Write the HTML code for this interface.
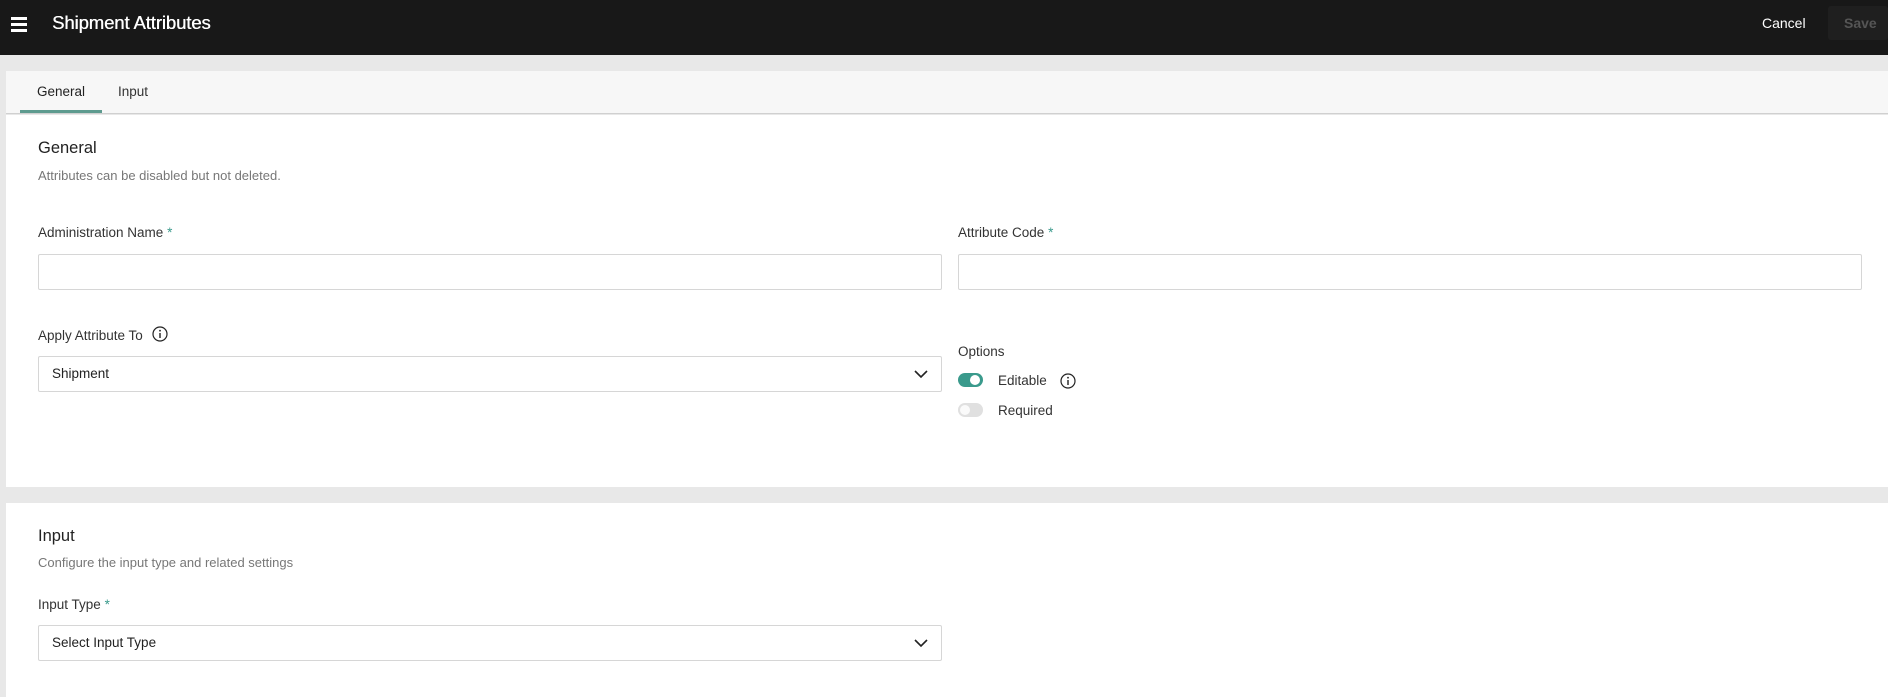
<!DOCTYPE html>
<html><head><meta charset="utf-8"><style>
*{box-sizing:border-box;margin:0;padding:0}
body{width:1888px;height:697px;overflow:hidden;background:#e8e8e8;font-family:"Liberation Sans",Arial,sans-serif;color:#2a2a2a;position:relative}
.a{position:absolute}
.hdr{left:0;top:0;width:1888px;height:55px;background:#181818}
.lbl{font-size:13.5px;color:#333;white-space:nowrap}
.star{color:#3a9a8c}
.box{border:1px solid #d6d6d6;border-radius:2px;background:#fff}
.sel{font-size:13.5px;color:#222;padding-left:13px;line-height:34px}
.chev{position:absolute;right:12px;top:10px}
</style></head><body>
<div class="a hdr">
  <div class="a" style="left:11px;top:17px;width:16px;height:2.5px;background:#fff"></div>
  <div class="a" style="left:11px;top:23px;width:16px;height:2.5px;background:#fff"></div>
  <div class="a" style="left:11px;top:29px;width:16px;height:2.5px;background:#fff"></div>
  <div class="a" style="left:52px;top:12px;color:#fff;font-size:18.5px;letter-spacing:-0.1px;text-shadow:0.4px 0 0 #fff">Shipment Attributes</div>
  <div class="a" style="left:1762px;top:15px;color:#fff;font-size:14px">Cancel</div>
  <div class="a" style="left:1828px;top:6px;width:60px;height:34px;background:#1f1f1f;border-radius:3px"></div>
  <div class="a" style="left:1844px;top:15px;color:#555;font-size:14px;font-weight:bold">Save</div>
</div>
<div class="a" style="left:6px;top:71px;width:1882px;height:43px;background:#f7f7f7;border-bottom:1px solid #d0d0d0"></div>
<div class="a" style="left:37px;top:84px;font-size:13.5px;color:#222">General</div>
<div class="a" style="left:20px;top:110px;width:82px;height:3px;background:#5e9b8f"></div>
<div class="a" style="left:118px;top:84px;font-size:13.5px;color:#333">Input</div>

<div class="a" style="left:6px;top:115px;width:1882px;height:372px;background:#fff"></div>
<div class="a" style="left:38px;top:139px;font-size:16.5px;color:#222">General</div>
<div class="a" style="left:38px;top:168px;font-size:13px;color:#777">Attributes can be disabled but not deleted.</div>

<div class="a lbl" style="left:38px;top:225px">Administration Name <span class="star">*</span></div>
<div class="a box" style="left:38px;top:254px;width:904px;height:36px"></div>
<div class="a lbl" style="left:958px;top:225px">Attribute Code <span class="star">*</span></div>
<div class="a box" style="left:958px;top:254px;width:904px;height:36px"></div>

<div class="a lbl" style="left:38px;top:328px">Apply Attribute To</div>
<svg class="a" style="left:152px;top:326px" width="16" height="16" viewBox="0 0 16 16"><circle cx="8" cy="8" r="7" fill="none" stroke="#222" stroke-width="1.2"/><rect x="7.3" y="7" width="1.4" height="5" fill="#222"/><circle cx="8" cy="4.7" r="0.9" fill="#222"/></svg>
<div class="a box sel" style="left:38px;top:356px;width:904px;height:36px">Shipment
<svg class="chev" width="16" height="14" viewBox="0 0 16 14"><path d="M2 4 L8 10 L14 4" fill="none" stroke="#222" stroke-width="1.6"/></svg></div>

<div class="a lbl" style="left:958px;top:344px">Options</div>
<div class="a" style="left:958px;top:373px;width:25px;height:14px;border-radius:7px;background:#3a9a8c"></div>
<div class="a" style="left:970px;top:375px;width:10px;height:10px;border-radius:5px;background:#fff"></div>
<div class="a lbl" style="left:998px;top:373px">Editable</div>
<svg class="a" style="left:1060px;top:373px" width="16" height="16" viewBox="0 0 16 16"><circle cx="8" cy="8" r="7" fill="none" stroke="#222" stroke-width="1.2"/><rect x="7.3" y="7" width="1.4" height="5" fill="#222"/><circle cx="8" cy="4.7" r="0.9" fill="#222"/></svg>
<div class="a" style="left:958px;top:403px;width:25px;height:14px;border-radius:7px;background:#e0e0e0"></div>
<div class="a" style="left:960px;top:405px;width:10px;height:10px;border-radius:5px;background:#fafafa"></div>
<div class="a lbl" style="left:998px;top:403px">Required</div>

<div class="a" style="left:6px;top:503px;width:1882px;height:194px;background:#fff"></div>
<div class="a" style="left:38px;top:527px;font-size:16.5px;color:#222">Input</div>
<div class="a" style="left:38px;top:555px;font-size:13px;color:#777">Configure the input type and related settings</div>
<div class="a lbl" style="left:38px;top:597px">Input Type <span class="star">*</span></div>
<div class="a box sel" style="left:38px;top:625px;width:904px;height:36px">Select Input Type
<svg class="chev" width="16" height="14" viewBox="0 0 16 14"><path d="M2 4 L8 10 L14 4" fill="none" stroke="#222" stroke-width="1.6"/></svg></div>
</body></html>
